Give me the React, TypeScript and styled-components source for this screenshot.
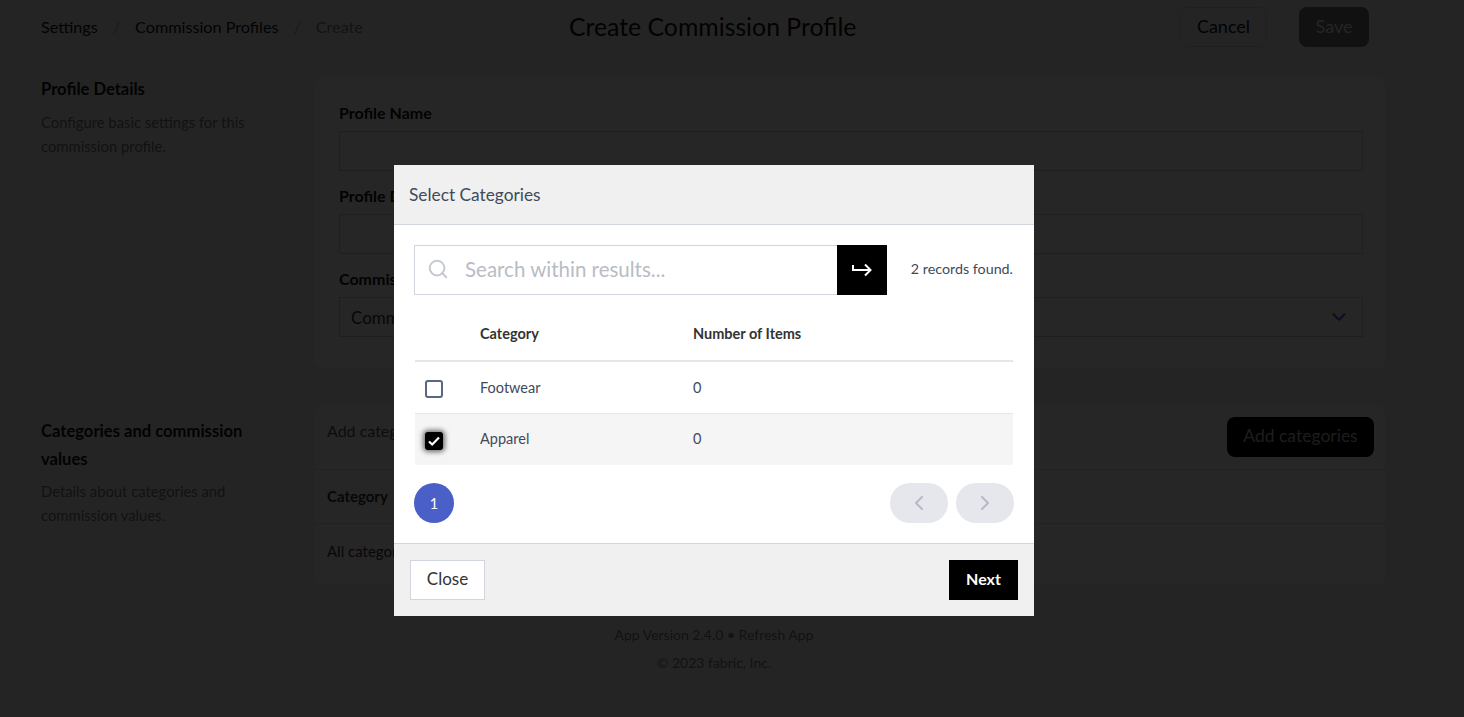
import styled, { createGlobalStyle } from "styled-components";
import { ChevronDown, ChevronLeft, ChevronRight, Search } from "lucide-react";

const GlobalStyle = createGlobalStyle`
  html, body {
    margin: 0;
    height: 100%;
    overflow: hidden;
    background: #f2f2f2;
    font-family: "Lato", "Liberation Sans", sans-serif;
  }
  * {
    box-sizing: border-box;
  }
`;

const App = () => {
  return (
    <>
      <GlobalStyle />
      <Page>
        <Header>
          <Crumbs>
            <Crumb>Settings</Crumb>
            <Slash>/</Slash>
            <Crumb>Commission Profiles</Crumb>
            <Slash>/</Slash>
            <Crumb $muted>Create</Crumb>
          </Crumbs>
          <PageTitle>Create Commission Profile</PageTitle>
          <HeaderActions>
            <CancelButton>Cancel</CancelButton>
            <SaveButton>Save</SaveButton>
          </HeaderActions>
        </Header>

        <Section>
          <SectionInfo>
            <SectionTitle>Profile Details</SectionTitle>
            <SectionText>
              Configure basic settings for this
              <br />
              commission profile.
            </SectionText>
          </SectionInfo>
          <DetailsCard>
            <Field>
              <FieldLabel>Profile Name</FieldLabel>
              <FieldBox />
            </Field>
            <Field>
              <FieldLabel>Profile Description</FieldLabel>
              <FieldBox />
            </Field>
            <Field>
              <FieldLabel>Commission Type</FieldLabel>
              <FieldBox>
                Commission
                <ChevronDown size={22} strokeWidth={2.5} color="#5568e0" />
              </FieldBox>
            </Field>
          </DetailsCard>
        </Section>

        <Section $second>
          <SectionInfo $second>
            <SectionTitle $second>
              Categories and commission
              <br />
              values
            </SectionTitle>
            <SectionText>
              Details about categories and
              <br />
              commission values.
            </SectionText>
          </SectionInfo>
          <CategoriesCard>
            <CategoriesHead>
              <CategoriesHint>Add categories to this profile</CategoriesHint>
              <AddButton>Add categories</AddButton>
            </CategoriesHead>
            <CategoriesRow $bold>Category</CategoriesRow>
            <CategoriesRow>All categories</CategoriesRow>
          </CategoriesCard>
        </Section>

        <PageFooter>
          <div>App Version 2.4.0 • Refresh App</div>
          <div>© 2023 fabric, Inc.</div>
        </PageFooter>
      </Page>

      <Overlay>
        <Modal>
          <ModalHeader>Select Categories</ModalHeader>
          <ModalBody>
            <SearchRow>
              <SearchBox>
                <Search size={22} strokeWidth={2.2} color="#c6cad4" />
                <SearchPlaceholder>Search within results...</SearchPlaceholder>
              </SearchBox>
              <SearchButton>
                <svg width="20" height="14" viewBox="0 0 20 14" fill="none" stroke="#fff" strokeWidth="2">
                  <path d="M1 2v5h17" />
                  <path d="M13 1.5L18.5 7 13 12.5" />
                </svg>
              </SearchButton>
              <RecordCount>2 records found.</RecordCount>
            </SearchRow>

            <TableHead>
              <CheckCell />
              <NameCell>Category</NameCell>
              <span>Number of Items</span>
            </TableHead>
            <TableRow>
              <CheckCell>
                <CheckBox />
              </CheckCell>
              <NameCell>Footwear</NameCell>
              <span>0</span>
            </TableRow>
            <TableRow $selected>
              <CheckCell>
                <CheckBox $checked>
                  <svg width="14" height="14" viewBox="0 0 14 14" fill="none" stroke="#fff" strokeWidth="2.2">
                    <path d="M2 7.5L5.2 10.5 12 3.5" />
                  </svg>
                </CheckBox>
              </CheckCell>
              <NameCell>Apparel</NameCell>
              <span>0</span>
            </TableRow>

            <Pagination>
              <PageNumber>1</PageNumber>
              <PageArrows>
                <ArrowButton>
                  <ChevronLeft size={24} strokeWidth={2} color="#b6bac6" />
                </ArrowButton>
                <ArrowButton>
                  <ChevronRight size={24} strokeWidth={2} color="#b6bac6" />
                </ArrowButton>
              </PageArrows>
            </Pagination>
          </ModalBody>
          <ModalFooter>
            <CloseButton>Close</CloseButton>
            <NextButton>Next</NextButton>
          </ModalFooter>
        </Modal>
      </Overlay>
    </>
  );
};

export default App;

const Page = styled.div`
  height: 717px;
  overflow: hidden;
  color: #000;
`;

const Header = styled.header`
  display: flex;
  align-items: center;
  height: 54px;
  padding: 0 95px 0 41px;
`;

const Crumbs = styled.div`
  display: flex;
  align-items: center;
  gap: 15px;
  width: 528px;
  padding-bottom: 2px;
  font-size: 16.2px;
`;

const Crumb = styled.span<{ $muted?: boolean }>`
  color: ${(p) => (p.$muted ? "#7d7d7d" : "#111")};
`;

const Slash = styled.span`
  color: #b0b0b0;
`;

const PageTitle = styled.h1`
  margin: 0;
  padding-bottom: 2px;
  font-size: 24.8px;
  font-weight: 400;
  color: #111;
`;

const HeaderActions = styled.div`
  display: flex;
  gap: 32px;
  margin-left: auto;
`;

const CancelButton = styled.button`
  width: 87px;
  height: 40px;
  padding: 0 0 3px;
  border: 1px solid #d8d8d8;
  border-radius: 8px;
  background: transparent;
  font: inherit;
  font-size: 18px;
  color: #111;
`;

const SaveButton = styled.button`
  width: 70px;
  height: 40px;
  padding: 0 0 3px;
  border: none;
  border-radius: 8px;
  background: #727272;
  font: inherit;
  font-size: 18px;
  color: #f2f2f2;
`;

const Section = styled.section<{ $second?: boolean }>`
  display: flex;
  margin-top: ${(p) => (p.$second ? "37px" : "23px")};
  padding-left: 41px;
`;

const SectionInfo = styled.div<{ $second?: boolean }>`
  width: 274px;
  padding-top: ${(p) => (p.$second ? "12px" : "0")};
`;

const SectionTitle = styled.h2<{ $second?: boolean }>`
  margin: 0 0 ${(p) => (p.$second ? "6px" : "9px")};
  font-size: 16.6px;
  font-weight: 700;
  line-height: ${(p) => (p.$second ? "28px" : "24px")};
  color: #111;
`;

const SectionText = styled.p`
  margin: 0;
  font-size: 14.8px;
  line-height: 24px;
  color: #777;
`;

const DetailsCard = styled.div`
  display: flex;
  flex-direction: column;
  gap: 13px;
  width: 1070px;
  height: 291px;
  padding: 24px 22px 24px 24px;
  border-radius: 8px;
  background: #fff;
`;

const Field = styled.div`
  display: flex;
  flex-direction: column;
  gap: 6px;
`;

const FieldLabel = styled.label`
  font-size: 16px;
  font-weight: 700;
  line-height: 24px;
  color: #111;
`;

const FieldBox = styled.div`
  display: flex;
  align-items: center;
  justify-content: space-between;
  height: 40px;
  padding: 0 12px 0 11px;
  border: 1px solid #cfcfcf;
  font-size: 17px;
  color: #333;
`;

const CategoriesCard = styled.div`
  width: 1070px;
  height: 180px;
  border-radius: 8px;
  background: #fff;
`;

const CategoriesHead = styled.div`
  display: flex;
  align-items: center;
  justify-content: space-between;
  height: 65px;
  padding: 0 11px 0 12px;
  border-bottom: 1px solid #e4e4e4;
  font-size: 16px;
  color: #555;
`;

const CategoriesHint = styled.span`
  padding-bottom: 14px;
`;

const AddButton = styled.button`
  width: 147px;
  height: 40px;
  padding: 0 0 3px;
  border: none;
  border-radius: 8px;
  background: #000;
  font: inherit;
  font-size: 17.5px;
  color: #bdbdbd;
`;

const CategoriesRow = styled.div<{ $bold?: boolean }>`
  display: flex;
  align-items: center;
  height: 54px;
  padding: 0 12px ${(p) => (p.$bold ? "2px" : "0")};
  border-bottom: ${(p) => (p.$bold ? "1px solid #e4e4e4" : "none")};
  font-size: 15px;
  font-weight: ${(p) => (p.$bold ? 700 : 400)};
  color: #333;
`;

const PageFooter = styled.footer`
  margin-top: 36px;
  padding-right: 36px;
  font-size: 14px;
  line-height: 28px;
  text-align: center;
  color: #777;
`;

const Overlay = styled.div`
  position: fixed;
  inset: 0;
  padding: 165px 0 0 394px;
  background: rgba(0, 0, 0, 0.85);
`;

const Modal = styled.div`
  display: flex;
  flex-direction: column;
  width: 640px;
  height: 451px;
  background: #fff;
`;

const ModalHeader = styled.div`
  display: flex;
  align-items: center;
  height: 60px;
  padding: 0 15px;
  border-bottom: 1px solid #d1d5e0;
  background: #f0f0f0;
  font-size: 17.3px;
  color: #414a5c;
`;

const ModalBody = styled.div`
  flex: 1;
  padding: 20px 20px 20px;
  font-size: 14.5px;
  color: #414a5c;
`;

const SearchRow = styled.div`
  display: flex;
  align-items: center;
`;

const SearchBox = styled.div`
  display: flex;
  align-items: center;
  gap: 16px;
  width: 423px;
  height: 50px;
  padding: 0 0 2px 12px;
  border: 1px solid #d1d5e0;
  border-right: none;
`;

const SearchPlaceholder = styled.span`
  font-size: 20.5px;
  color: #b9bcc4;
`;

const SearchButton = styled.div`
  display: flex;
  align-items: center;
  justify-content: center;
  width: 50px;
  height: 50px;
  background: #000;
`;

const RecordCount = styled.span`
  margin: 0 1px 0 auto;
  padding-bottom: 3px;
  font-size: 14.3px;
`;

const TableHead = styled.div`
  display: flex;
  align-items: center;
  height: 52px;
  margin: 15px 1px 0;
  padding-bottom: 4px;
  border-bottom: 2px solid #e6e6e6;
  font-weight: 700;
  color: #333;
`;

const TableRow = styled.div<{ $selected?: boolean }>`
  display: flex;
  align-items: center;
  height: ${(p) => (p.$selected ? "52px" : "51px")};
  margin: 0 1px;
  padding-bottom: ${(p) => (p.$selected ? "2px" : "0")};
  border-top: ${(p) => (p.$selected ? "1px solid #e6e6e6" : "none")};
  background: ${(p) => (p.$selected ? "#f5f5f5" : "transparent")};
`;

const CheckCell = styled.div`
  display: flex;
  align-items: center;
  width: 65px;
  padding-left: 10px;
`;

const NameCell = styled.span`
  width: 213px;
`;

const CheckBox = styled.div<{ $checked?: boolean }>`
  display: flex;
  align-items: center;
  justify-content: center;
  width: 18px;
  height: 18px;
  margin-top: ${(p) => (p.$checked ? "5px" : "2px")};
  border: ${(p) => (p.$checked ? "none" : "2px solid #5a6784")};
  border-radius: 3px;
  background: ${(p) => (p.$checked ? "#000" : "#fff")};
  box-shadow: ${(p) => (p.$checked ? "0 0 5px 2px rgba(0, 0, 0, 0.55)" : "none")};
`;

const Pagination = styled.div`
  display: flex;
  align-items: center;
  justify-content: space-between;
  margin-top: 18px;
`;

const PageNumber = styled.div`
  display: flex;
  align-items: center;
  justify-content: center;
  width: 40px;
  height: 40px;
  border-radius: 50%;
  background: #4a60c8;
  color: #fff;
`;

const PageArrows = styled.div`
  display: flex;
  gap: 8px;
`;

const ArrowButton = styled.div`
  display: flex;
  align-items: center;
  justify-content: center;
  width: 58px;
  height: 40px;
  border-radius: 20px;
  background: #e6e7ec;
`;

const ModalFooter = styled.div`
  display: flex;
  align-items: center;
  justify-content: space-between;
  height: 73px;
  padding: 0 16px;
  border-top: 1px solid #d1d5e0;
  background: #f0f0f0;
`;

const CloseButton = styled.button`
  width: 75px;
  height: 40px;
  padding: 0 0 3px;
  border: 1px solid #d1d5e0;
  background: #fff;
  font: inherit;
  font-size: 17px;
  color: #333;
`;

const NextButton = styled.button`
  width: 69px;
  height: 40px;
  padding: 0 0 3px;
  border: none;
  background: #000;
  font: inherit;
  font-size: 16px;
  font-weight: 700;
  color: #fff;
`;
